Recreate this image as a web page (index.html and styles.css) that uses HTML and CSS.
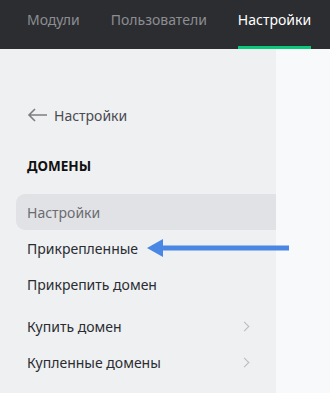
FILE: index.html
```html
<!DOCTYPE html>
<html lang="ru">
<head>
    <meta charset="UTF-8">
    <meta name="viewport" content="width=device-width, initial-scale=1.0">
    <title>Домены</title>
    <link rel="stylesheet" href="styles.css">
</head>
<body>
    <nav class="topbar">
        <a class="tab">Модули</a>
        <a class="tab">Пользователи</a>
        <a class="tab active">Настройки</a>
    </nav>
    <div class="page">
        <aside class="sidebar">
            <a class="back">
                <svg width="21" height="14" viewBox="0 0 21 14"><path d="M20 7H2M8 1L2 7l6 6" fill="none" stroke="#7d7e82" stroke-width="1.6"/></svg>
                Настройки
            </a>
            <div class="section-title">ДОМЕНЫ</div>
            <ul class="menu">
                <li class="item selected">Настройки</li>
                <li class="item pinned">Прикрепленные
                    <svg class="pointer" width="144" height="20" viewBox="0 0 144 20"><path d="M0 10L16 1v6.5h126v5H16V19z" fill="#4a86e4"/></svg>
                </li>
                <li class="item">Прикрепить домен</li>
                <li class="item gap">Купить домен <span class="chev"></span></li>
                <li class="item">Купленные домены <span class="chev"></span></li>
            </ul>
        </aside>
        <main class="content"></main>
    </div>
</body>
</html>
```

FILE: styles.css
```css
body {
    margin: 0;
    font-family: 'Noto Sans', sans-serif;
    font-size: 14px;
    background: #f8f9fb;
    height: 393px;
    overflow: hidden;
}
.topbar {
    display: flex;
    height: 49px;
    background: #2c2d31;
    padding-left: 27px;
    gap: 31px;
}
.tab {
    color: #8d8e92;
    font-size: 14px;
    line-height: 40px;
    border-bottom: 3px solid transparent;
    height: 46px;
}
.tab.active {
    color: #fff;
    border-bottom-color: #0bc97c;
}
.page {
    display: flex;
    height: 344px;
}
.sidebar {
    width: 260px;
    background: #eef0f1;
    padding: 55px 0 0 16px;
}
.content {
    flex: 1;
}
.back {
    display: flex;
    align-items: center;
    gap: 6px;
    color: #4a4b52;
    padding-left: 11px;
    height: 22px;
}
.section-title {
    font-weight: bold;
    font-size: 13.5px;
    color: #111;
    padding-left: 11px;
    margin-top: 31px;
}
.menu {
    list-style: none;
    margin: 19px 0 0;
    padding: 0;
}
.item {
    position: relative;
    display: flex;
    align-items: center;
    height: 36px;
    padding-left: 11px;
    padding-right: 28px;
    color: #2b2c33;
}
.item.selected {
    background: #e1e2e5;
    color: #6b6c71;
    border-radius: 9px 0 0 9px;
}
.item.gap {
    margin-top: 6px;
}
.pointer {
    position: absolute;
    left: 131px;
    top: 8px;
}
.chev {
    margin-left: auto;
    width: 6px;
    height: 6px;
    border-top: 1.3px solid #b9babd;
    border-right: 1.3px solid #b9babd;
    transform: rotate(45deg);
}
```
